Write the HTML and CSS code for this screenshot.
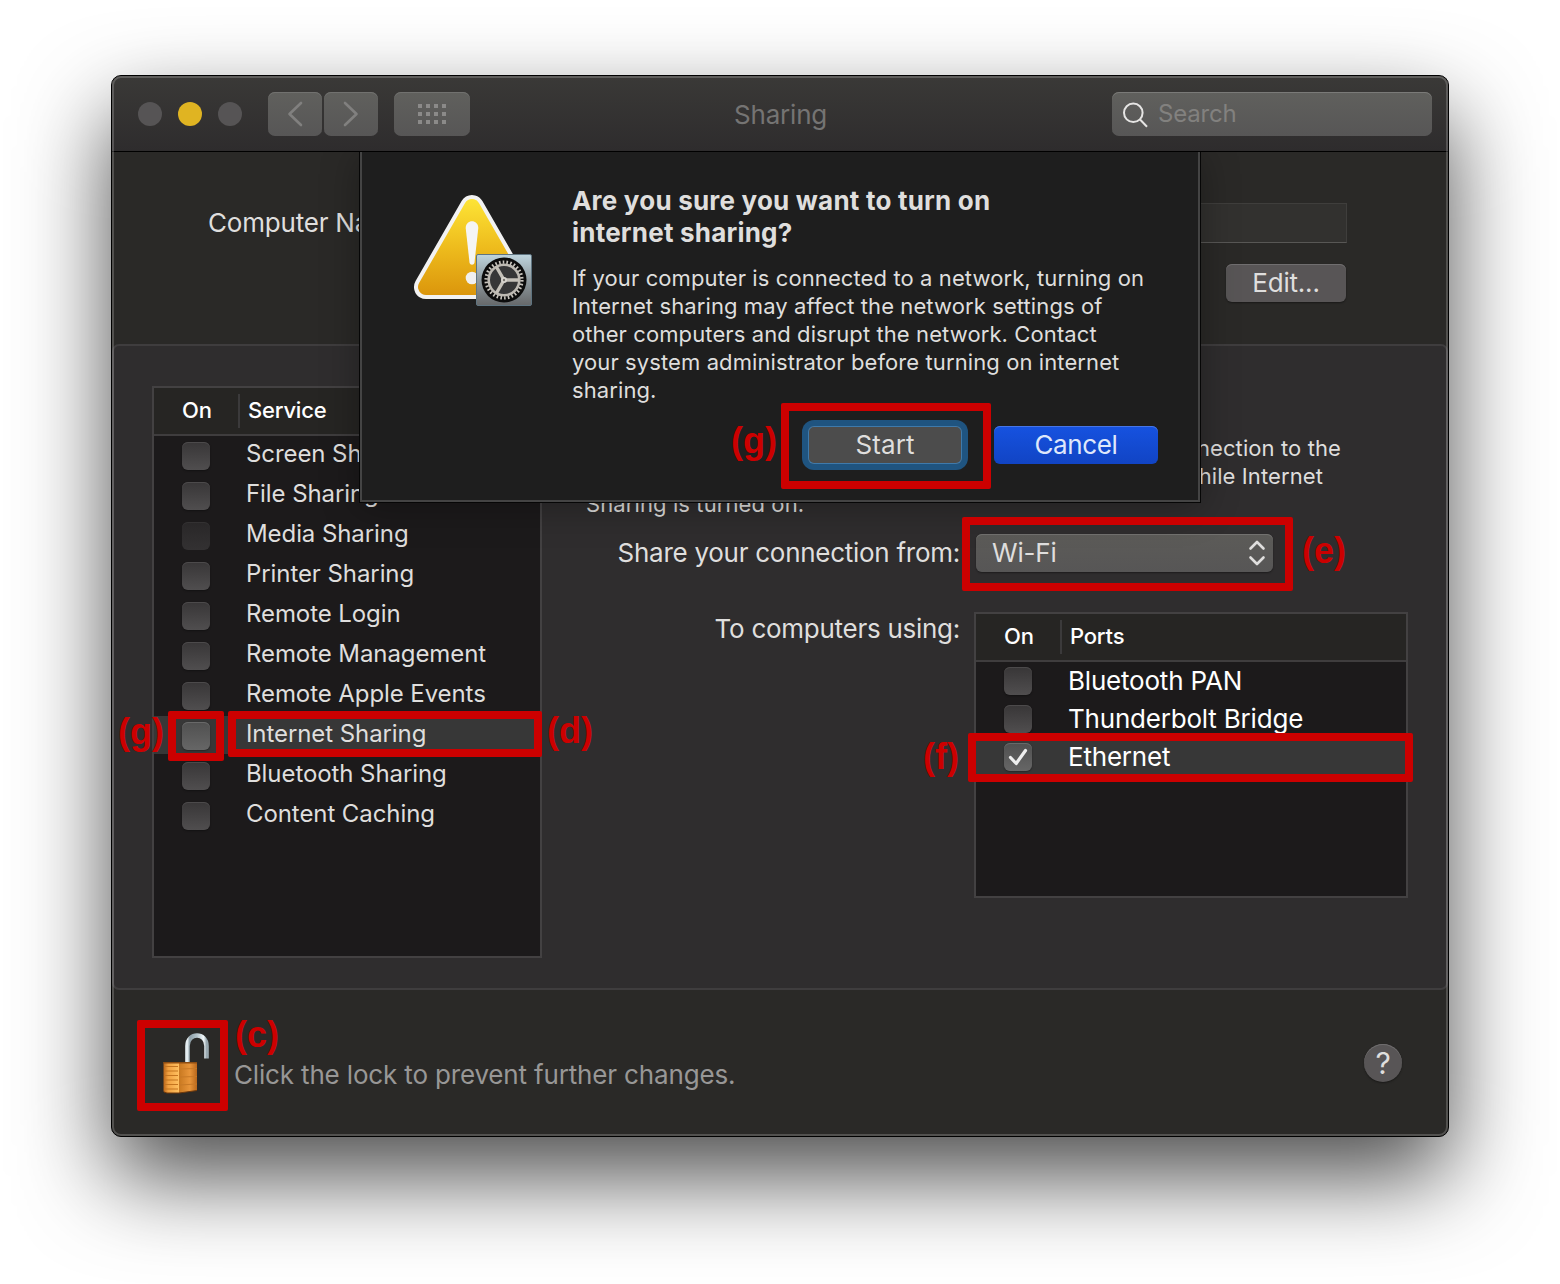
FILE: index.html
```html
<!DOCTYPE html>
<html lang="en">
<head>
<meta charset="utf-8">
<title>Sharing</title>
<link rel="stylesheet" href="styles.css">
</head>
<body>
<main class="window">
  <header class="titlebar">
    <div class="lights"><i></i><i class="amber"></i><i></i></div>
    <div class="nav">
      <button class="tool"><svg width="54" height="44" viewBox="0 0 54 44"><path d="M33 11 21.500 22 33 33"/></svg></button>
      <button class="tool"><svg width="54" height="44" viewBox="0 0 54 44"><path d="M21 11 32.500 22 21 33"/></svg></button>
    </div>
    <button class="tool grid-tool"><svg width="28" height="20" viewBox="0 0 28 20"><g class="dots"><path d="M0 2H28M0 10H28M0 18H28" stroke-dasharray="4 4"/></g></svg></button>
    <h1 class="title">Sharing</h1>
    <div class="search">
      <svg width="28" height="28" viewBox="0 0 28 28"><circle cx="11.300" cy="10.800" r="9.300"/><path d="M17.800 17.300 25 24.800"/></svg>
      <span>Search</span>
    </div>
  </header>

  <section class="identity">
    <div class="name-row"><label>Computer Name:</label><div class="field"></div></div>
    <button class="push edit">Edit...</button>
  </section>

  <section class="panel">
    <div class="table services">
      <div class="thead"><span class="on">On</span><span class="col">Service</span></div>
      <ul class="rows">
        <li><i class="check"></i><span>Screen Sharing</span></li>
        <li><i class="check"></i><span>File Sharing</span></li>
        <li><i class="check off"></i><span>Media Sharing</span></li>
        <li><i class="check"></i><span>Printer Sharing</span></li>
        <li><i class="check"></i><span>Remote Login</span></li>
        <li><i class="check"></i><span>Remote Management</span></li>
        <li><i class="check"></i><span>Remote Apple Events</span></li>
        <li class="selected"><i class="check"></i><span>Internet Sharing</span></li>
        <li><i class="check"></i><span>Bluetooth Sharing</span></li>
        <li><i class="check"></i><span>Content Caching</span></li>
      </ul>
    </div>
    <div class="detail">
      <p class="about"><span class="l1">connection to the</span><span class="l2">while Internet</span><span>Sharing is turned on.</span></p>
      <div class="form">
        <label class="from">Share your connection from:</label>
        <div class="popup"><span>Wi-Fi</span><svg width="18" height="28" viewBox="0 0 18 28"><path d="M2.500 9.500 9 3l6.500 6.500M2.500 18.500 9 25l6.500-6.500"/></svg></div>
        <label class="to">To computers using:</label>
        <div class="table ports">
          <div class="thead"><span class="on">On</span><span class="col">Ports</span></div>
          <ul class="rows">
            <li><i class="check"></i><span>Bluetooth PAN</span></li>
            <li><i class="check"></i><span>Thunderbolt Bridge</span></li>
            <li class="selected"><i class="check"><svg width="28" height="28" viewBox="0 0 28 28"><path d="M6.500 14.500 12.200 20.500 21.500 7.500"/></svg></i><span>Ethernet</span></li>
          </ul>
        </div>
      </div>
    </div>
  </section>

  <footer class="footer">
    <svg class="lock" width="48" height="62" viewBox="0 0 48 62">
      <defs>
        <linearGradient id="steel" x1="0" x2="1"><stop offset="0" stop-color="#e4edf0"/><stop offset=".12" stop-color="#8fa0a8"/><stop offset=".5" stop-color="#b4c3ca"/><stop offset=".85" stop-color="#f2f8fa"/><stop offset="1" stop-color="#9aa9b0"/></linearGradient>
        <linearGradient id="brassL" x1="0" x2="1"><stop offset="0" stop-color="#b8641a"/><stop offset=".3" stop-color="#f0a040"/><stop offset="1" stop-color="#ffc060"/></linearGradient>
        <linearGradient id="brassR" x1="0" x2="1"><stop offset="0" stop-color="#c87820"/><stop offset=".6" stop-color="#e8953a"/><stop offset="1" stop-color="#b8671c"/></linearGradient>
      </defs>
      <path d="M25.500 31V14C25.500 0 44.500 0 44.500 14v12.500" fill="none" stroke="url(#steel)" stroke-width="4.600"/>
      <path d="M1.500 30H17v31H4l-2.500-1.500z" fill="url(#brassL)"/>
      <path d="M17 30h18v28.500L17 61z" fill="url(#brassR)"/>
      <path d="M2 34.500H16M2 39H16M2 43.500H16M2 48H16M2 52.500H16M2 57H16" stroke="#c4741f" stroke-width="1"/>
      <path d="M17 37l18-.5M17 45l18-.5M17 53l18-1" stroke="#c87926" stroke-width="1"/>
      <path d="M1.500 30.700H35" stroke="#8d4d12" stroke-width="1.400"/>
      <path d="M2 60 5 61H17l18-2.500" fill="none" stroke="#70390b" stroke-width="1"/>
    </svg>
    <span class="hint">Click the lock to prevent further changes.</span>
    <button class="help">?</button>
  </footer>

  <div class="sheet-clip"><div class="sheet">
    <svg class="alert-icon" width="120" height="114" viewBox="412 193 120 114">
      <defs>
        <linearGradient id="warn" gradientUnits="userSpaceOnUse" x1="0" y1="199" x2="0" y2="295"><stop offset="0" stop-color="#fde436"/><stop offset=".5" stop-color="#eebc1d"/><stop offset="1" stop-color="#db960c"/></linearGradient>
        <linearGradient id="plate" x1="0" y1="0" x2="0" y2="1"><stop offset="0" stop-color="#bfd5de"/><stop offset=".5" stop-color="#8f9a9f"/><stop offset="1" stop-color="#66686a"/></linearGradient>
      </defs>
      <path d="M472 207 426 287H518z" fill="#f2f2f2" stroke="#f2f2f2" stroke-width="24" stroke-linejoin="round"/>
      <path d="M472 207 426 287H518z" fill="url(#warn)" stroke="url(#warn)" stroke-width="16" stroke-linejoin="round"/>
      <path d="M465.700 228C465.700 219 478.300 219 478.300 228L474.500 262.500C474 265.500 470 265.500 469.500 262.500z" fill="#f5f5f5"/>
      <circle cx="472" cy="278" r="6.300" fill="#f0f0f0"/>
      <rect x="476.500" y="254.500" width="55" height="51" rx="1.500" fill="url(#plate)" stroke="#5f7480"/>
      <circle cx="504" cy="280" r="22.500" fill="#0c0c0c"/>
      <circle cx="504" cy="280" r="17.900" fill="none" stroke="#c9c5be" stroke-width="3.400" stroke-dasharray="1.600 2.150"/>
      <circle cx="504" cy="280" r="15.300" fill="#363637" stroke="#bdb9b2" stroke-width="2.600"/>
      <path d="M504 280H519M504 280 496.500 267M504 280 496.500 293" stroke="#c4c0b8" stroke-width="3.400"/>
      <circle cx="504" cy="280" r="3" fill="#d8d5cf"/><circle cx="504" cy="280" r="1.200" fill="#77736d"/>
    </svg>
    <div class="message">
      <h2>Are you sure you want to turn on<br>internet sharing?</h2>
      <p>If your computer is connected to a network, turning on<br>Internet sharing may affect the network settings of<br>other computers and disrupt the network. Contact<br>your system administrator before turning on internet<br>sharing.</p>
      <div class="actions"><button class="push start">Start</button><button class="push primary">Cancel</button></div>
    </div>
  </div></div>
</main>

<div class="mark mark-start"></div><b class="tag tag-start">(g)</b>
<div class="mark mark-from"></div><b class="tag tag-from">(e)</b>
<div class="mark mark-port"></div><b class="tag tag-port">(f)</b>
<div class="mark mark-box"></div><b class="tag tag-box">(g)</b>
<div class="mark mark-service"></div><b class="tag tag-service">(d)</b>
<div class="mark mark-lock"></div><b class="tag tag-lock">(c)</b>
</body>
</html>
```
FILE: styles.css
```css
* { box-sizing: border-box; }
body {
  margin: 0;
  width: 1560px;
  height: 1284px;
  padding: 75px 111px;
  position: relative;
  overflow: hidden;
  background: #fff;
  color: #dfdedd;
  font: 26px/34px Inter, "Liberation Sans", sans-serif;
  letter-spacing: -.2px;
}
h1, h2, p, ul { margin: 0; padding: 0; list-style: none; }
button { font: inherit; letter-spacing: inherit; color: inherit; border: 0; padding: 0; margin: 0; display: block; }
svg { display: block; fill: none; }

.window {
  position: relative;
  width: 1338px;
  height: 1062px;
  border: 1px solid #000;
  border-radius: 10px;
  background: #2a2927;
  box-shadow: 0 40px 90px rgba(0, 0, 0, .7);
  display: flex;
  flex-direction: column;
}
.window::after {
  content: "";
  position: absolute;
  inset: 0;
  border: 2px solid rgba(255, 255, 255, .19);
  border-radius: 9px;
  pointer-events: none;
}

/* title bar */
.titlebar {
  position: relative;
  height: 76px;
  flex: none;
  display: flex;
  align-items: flex-start;
  padding: 16px 16px 0 26px;
  border-bottom: 1px solid #000;
  border-radius: 9px 9px 0 0;
  background: linear-gradient(#3a3937, #2e2c2d);
}
.lights { display: flex; gap: 16px; padding-top: 10px; margin-right: 26px; }
.lights i { width: 24px; height: 24px; border-radius: 50%; background: #565455; }
.lights .amber { background: #e0b422; }
.nav { display: flex; gap: 2px; margin-right: 16px; }
.tool {
  width: 54px;
  height: 44px;
  border-radius: 7px;
  background: linear-gradient(#60605d, #575656);
  box-shadow: inset 0 1px #71716f;
}
.tool svg { stroke: #81807f; stroke-width: 2.6; stroke-linecap: round; stroke-linejoin: round; }
.grid-tool { width: 76px; padding: 12px 24px; }
.grid-tool .dots { stroke-width: 4; stroke-linecap: butt; stroke: #8b8a89; }
.title { flex: 1; padding-left: 264px; font: 400 26px/46px Inter, sans-serif; color: #757473; }
.search {
  width: 320px;
  height: 44px;
  border-radius: 7px;
  padding: 10px 10px 0;
  display: flex;
  gap: 8px;
  background: linear-gradient(#60605d, #575656);
  box-shadow: inset 0 1px #7a7a78;
  color: #82817f;
  font-size: 24px;
  line-height: 24px;
}
.search svg { stroke: #e6e5e4; stroke-width: 2; }

/* computer name */
.identity { height: 192px; flex: none; padding: 51px 101px 0 96px; }
.name-row { display: flex; gap: 12px; line-height: 39px; }
.field { flex: 1; height: 40px; background: #32312f; border: 1px solid #3f3e3c; border-bottom-color: #585755; }
.push {
  height: 38px;
  line-height: 38px;
  border-radius: 6px;
  text-align: center;
  background: #585556;
  box-shadow: inset 0 1px #706e6f, 0 1px 2px rgba(0, 0, 0, .4);
}
.edit { width: 120px; margin: 21px 1px 0 auto; }

/* sharing panel */
.panel {
  height: 646px;
  flex: none;
  padding: 40px 38px;
  border: 2px solid #3f3d3e;
  border-radius: 7px;
  background: #2f2d2e;
  display: flex;
  gap: 44px;
}
.table { border: 2px solid #434142; background: #1c1a1b; }
.thead {
  height: 48px;
  border-bottom: 2px solid #3f3d3e;
  background: #262523;
  display: flex;
  padding-top: 6px;
  font: 500 22px/32px Inter, sans-serif;
  color: #fff;
}
.thead .on { width: 86px; height: 34px; padding-left: 28px; border-right: 2px solid #3b3a3b; }
.thead .col { padding-left: 8px; }
.rows li { height: 38px; display: flex; }
.check {
  width: 28px;
  height: 28px;
  flex: none;
  border-radius: 6px;
  background: linear-gradient(#383637, #504e4f);
  box-shadow: inset 0 1px #4c4a4b, 0 1px 2px rgba(0, 0, 0, .35);
}
.check.off { background: linear-gradient(#292728, #333132); box-shadow: inset 0 1px #333132; }
.check svg { stroke: #eee; stroke-width: 3.2; stroke-linecap: round; stroke-linejoin: round; }
.selected { background: #373737; }
.selected .check { background: linear-gradient(#505050, #666); box-shadow: inset 0 1px #696969, 0 1px 2px rgba(0, 0, 0, .35); }

.services { width: 390px; height: 572px; }
.services .rows { display: grid; gap: 2px; font-size: 24px; line-height: 35px; letter-spacing: -.08px; }
.services li { padding-left: 28px; gap: 36px; }
.services .check { margin-top: 6px; }

.detail { padding-top: 48px; }
.about { width: 756px; font-size: 22px; line-height: 28px; letter-spacing: .1px; }
.about > span { display: block; white-space: nowrap; }
.about .l1 { width: 755px; text-align: right; }
.about .l2 { width: 737px; text-align: right; }
.form { display: grid; grid-template-columns: 388px 434px; row-gap: 40px; margin-top: 16px; }
.form label { text-align: right; padding-right: 14px; letter-spacing: -.27px; }
.from { line-height: 38px; }
.popup {
  width: 297px;
  height: 38px;
  margin-left: 2px;
  padding: 0 7px 0 16px;
  border-radius: 6px;
  display: flex;
  justify-content: space-between;
  line-height: 38px;
  background: linear-gradient(#5c5b58, #575656);
  box-shadow: inset 0 1px #72716f, 0 1px 2px rgba(0, 0, 0, .4);
}
.popup svg { margin-top: 5px; stroke: #dfdedd; stroke-width: 2.6; stroke-linecap: round; stroke-linejoin: round; }
.ports { height: 286px; color: #fff; }
.ports li { padding-left: 28px; gap: 36px; line-height: 38px; }
.ports .check { margin-top: 5px; }

/* footer */
.footer { flex: 1; position: relative; display: flex; padding: 42px 46px 0 50px; }
.hint { margin: 26px auto 0 24px; color: #989796; letter-spacing: -.16px; }
.help {
  width: 38px;
  height: 38px;
  margin-top: 12px;
  border-radius: 50%;
  background: #585556;
  box-shadow: inset 0 1px #706e6f, 0 1px 2px rgba(0, 0, 0, .4);
  font-size: 30px;
  line-height: 38px;
  text-align: center;
}

/* confirmation sheet */
.sheet-clip { position: absolute; left: 0; top: 76px; width: 1336px; height: 500px; overflow: hidden; pointer-events: none; }
.sheet {
  width: 842px;
  height: 351px;
  margin-left: 247px;
  border: 1px solid #060606;
  border-top: 0;
  background: #1e1e1e;
  box-shadow: inset 2px 0 #444, inset -2px 0 #444, inset 0 -2px #444, 0 4px 36px rgba(0, 0, 0, .3);
  display: flex;
  padding: 33px 42px 0 52px;
}
.alert-icon { margin-top: 8px; flex: none; }
.message { padding-left: 40px; flex: 1; }
.message h2 { font: 700 26px/32px Inter, sans-serif; letter-spacing: .01px; word-spacing: 1px; }
.message p { margin-top: 15px; font-size: 22px; line-height: 28px; letter-spacing: .1px; white-space: nowrap; }
.actions { display: flex; justify-content: flex-end; gap: 32px; margin-top: 22px; }
.start { width: 154px; letter-spacing: .1px; background: #4c4c4c; box-shadow: inset 0 0 0 1px #3f7aab, 0 0 0 6px #1f5480; }
.primary { width: 164px; letter-spacing: -.35px; color: #dfe7fb; background: linear-gradient(#1652e0, #1144c4); box-shadow: inset 0 1px #4676e6; }
.message h2 { letter-spacing: .21px; word-spacing: 0; }

/* step markers */
.mark { position: absolute; border: 8px solid #c00; border-radius: 2px; }
.tag { position: absolute; color: #c00; font: 700 36px/40px "Liberation Sans", sans-serif; letter-spacing: 0; }
.mark-start { left: 781px; top: 403px; width: 210px; height: 86px; }
.tag-start { left: 731px; top: 421px; }
.mark-from { left: 962px; top: 517px; width: 331px; height: 74px; }
.tag-from { left: 1302px; top: 531px; }
.mark-port { left: 968px; top: 733px; width: 445px; height: 49px; }
.tag-port { left: 923px; top: 737px; }
.mark-box { left: 168px; top: 711px; width: 56px; height: 50px; }
.tag-box { left: 118px; top: 712px; }
.mark-service { left: 228px; top: 711px; width: 314px; height: 46px; }
.tag-service { left: 547px; top: 711px; }
.mark-lock { left: 137px; top: 1020px; width: 91px; height: 91px; }
.tag-lock { left: 235px; top: 1015px; }
```
